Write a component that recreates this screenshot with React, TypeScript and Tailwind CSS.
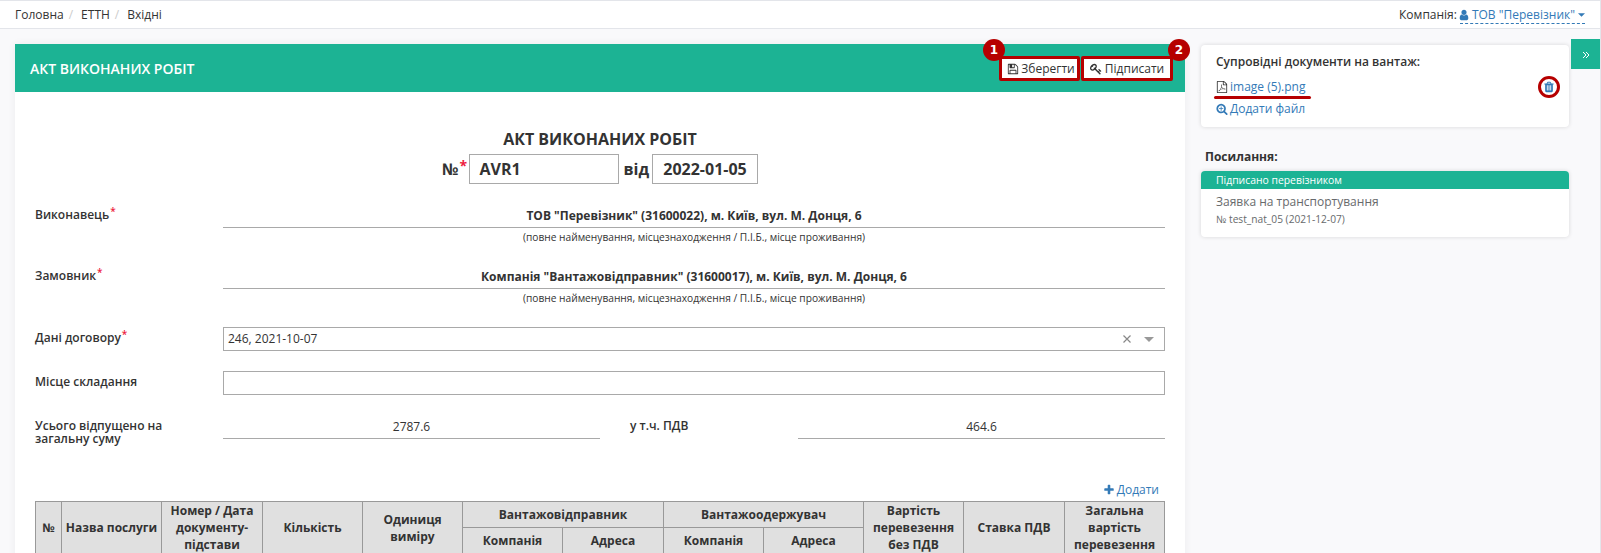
import type { ReactNode } from "react";

const ICONS = {
  save: "M512 1536h768v-384h-768v384zM1408 1536h128v-896q0-14-10-38.500t-20-34.500l-281-281q-10-10-34-20t-39-10v416q0 40-28 68t-68 28h-576q-40 0-68-28t-28-68v-416h-128v1280h128v-416q0-40 28-68t68-28h832q40 0 68 28t28 68v416zM1024 608v-320q0-13-9.500-22.500t-22.500-9.500h-192q-13 0-22.500 9.500t-9.500 22.500v320q0 13 9.500 22.500t22.500 9.500h192q13 0 22.500-9.500t9.500-22.500zM1664 640v928q0 40-28 68t-68 28h-1344q-40 0-68-28t-28-68v-1344q0-40 28-68t68-28h928q40 0 88 20t76 48l280 280q28 28 48 76t20 88z",
  key: "M832 512q0-80-56-136t-136-56-136 56-56 136q0 42 19 83-41-19-83-19-80 0-136 56t-56 136 56 136 136 56 136-56 56-136q0-42-19-83 41 19 83 19 80 0 136-56t56-136zm851 704q0 17-49 66t-66 49q-9 0-28.500-16t-36.500-33-38.500-40-24.500-26l-96 96 220 220q28 28 28 68 0 42-39 81t-81 39q-40 0-68-28l-671-671q-176 131-365 131-163 0-265.500-102.500t-102.500-265.500q0-160 95-313t248-248 313-95q163 0 265.500 102.500t102.500 265.500q0 189-131 365l355 355 96-96q-3-3-26-24.500t-40-38.500-33-36.500-16-28.500q0-17 49-66t66-49q13 0 23 10 6 6 46 44.500t82 79.500 86.500 86 73 78 28.500 41z",
  trash: "M704 1376v-704q0-14-9-23t-23-9h-64q-14 0-23 9t-9 23v704q0 14 9 23t23 9h64q14 0 23-9t9-23zm256 0v-704q0-14-9-23t-23-9h-64q-14 0-23 9t-9 23v704q0 14 9 23t23 9h64q14 0 23-9t9-23zm256 0v-704q0-14-9-23t-23-9h-64q-14 0-23 9t-9 23v704q0 14 9 23t23 9h64q14 0 23-9t9-23zm-544-992h448l-48-117q-7-9-17-11h-317q-10 2-17 11zm928 32v64q0 14-9 23t-23 9h-96v948q0 83-47 143.500t-113 60.500h-832q-66 0-113-58.500t-47-141.500v-952h-96q-14 0-23-9t-9-23v-64q0-14 9-23t23-9h309l70-167q15-37 54-63t79-26h320q40 0 79 26t54 63l70 167h309q14 0 23 9t9 23z",
  searchPlus: "M1088 800v64q0 13-9.500 22.500t-22.500 9.500h-224v224q0 13-9.500 22.500t-22.500 9.500h-64q-13 0-22.500-9.500t-9.500-22.500v-224h-224q-13 0-22.500-9.500t-9.500-22.500v-64q0-13 9.500-22.500t22.500-9.500h224v-224q0-13 9.500-22.500t22.500-9.500h64q13 0 22.500 9.500t9.500 22.500v224h224q13 0 22.500 9.500t9.500 22.500zm128 32q0-185-131.500-316.500t-316.500-131.500-316.500 131.500-131.500 316.500 131.500 316.500 316.500 131.500 316.500-131.500 131.500-316.500zm512 832q0 53-37.500 90.500t-90.500 37.500q-54 0-90-38l-343-342q-179 124-399 124-143 0-273.500-55.500t-225-150-150-225-55.500-273.500 55.500-273.500 150-225 225-150 273.500-55.500 273.500 55.500 225 150 150 225 55.500 273.500q0 220-124 399l343 343q37 37 37 90z",
  pdf: "M1596 380q28 28 48 76t20 88v1152q0 40-28 68t-68 28h-1344q-40 0-68-28t-28-68v-1600q0-40 28-68t68-28h896q40 0 88 20t76 48zm-444-244v376h376q-10-29-22-41l-313-313q-12-12-41-22zm384 1528v-1024h-416q-40 0-68-28t-28-68v-416h-768v1536h1280zm-514-593q33 26 84 56 59-7 117-7 147 0 177 49 16 22 2 52 0 1-1 2l-2 2v1q-6 38-71 38-48 0-115-20t-130-53q-221 24-392 83-153 262-242 262-15 0-28-7l-24-12q-1-1-6-5-10-10-6-36 9-40 56-91.500t132-96.500q14-9 23 6 2 2 2 4 52-85 107-197 68-136 104-262-24-82-30.500-159.500t6.500-127.500q11-40 42-40h22q23 0 35 15 18 21 9 68-2 6-4 8 1 3 1 8v30q-2 123-14 192 55 164 146 238zm-576 411q52-24 137-158-51 40-87.500 84t-49.500 74zm398-920q-15 42-2 132 1-7 7-44 0-3 7-43 1-4 4-8-1-1-1-2-1-2-1-3-1-22-13-36 0 1-1 2v2zm-124 661q135-54 284-81-2-1-13-9.500t-16-13.500q-76-67-127-176-27 86-83 197-30 56-45 83zm646-16q-24-24-140-24 76 28 124 28 14 0 18-1 0-1-2-3z",
  user: "M1536 1399q0 109-62.500 187t-150.500 78h-854q-88 0-150.500-78t-62.500-187q0-85 8.500-160.500t31.500-152 58.500-131 94-89 134.500-34.500q131 128 313 128t313-128q76 0 134.500 34.500t94 89 58.500 131 31.500 152 8.500 160.500zm-256-887q0 159-112.500 271.500t-271.500 112.500-271.500-112.500-112.500-271.500 112.500-271.500 271.500-112.500 271.500 112.500 112.500 271.500z",
  plus: "M1600 736v192q0 40-28 68t-68 28h-416v416q0 40-28 68t-68 28h-192q-40 0-68-28t-28-68v-416h-416q-40 0-68-28t-28-68v-192q0-40 28-68t68-28h416v-416q0-40 28-68t68-28h192q40 0 68 28t28 68v416h416q40 0 68 28t28 68z",
};

function Icon({ name, className = "" }: { name: keyof typeof ICONS; className?: string }) {
  return (
    <svg viewBox="0 0 1792 1792" fill="currentColor" className={`size-[12px] shrink-0 ${className}`}>
      <path d={ICONS[name]} />
    </svg>
  );
}

function Label({ children, required }: { children: ReactNode; required?: boolean }) {
  return (
    <div className="w-[188px] shrink-0 text-[12px] leading-[13px] font-semibold">
      {children}
      {required && <span className="relative -top-[4px] ml-px text-[10px] font-semibold text-[#ed1c40]">*</span>}
    </div>
  );
}

function Party({ label, value }: { label: string; value: string }) {
  return (
    <div className="flex h-[61px]">
      <Label required>{label}</Label>
      <div className="flex-1 text-center">
        <div className="h-[20px] border-b border-[#a9a9a9] text-[12px] leading-[16px] font-bold">{value}</div>
        <div className="text-[10.2px] leading-[19px]">(повне найменування, місцезнаходження / П.І.Б., місце проживання)</div>
      </div>
    </div>
  );
}

function Th({ children, rows = 1, cols = 1 }: { children: ReactNode; rows?: number; cols?: number }) {
  return (
    <th rowSpan={rows} colSpan={cols} className="border border-[#999] bg-[#e0e0e0] p-0 align-middle font-bold">
      {children}
    </th>
  );
}

function Badge({ children, className }: { children: ReactNode; className: string }) {
  return (
    <span className={`absolute flex size-[22px] items-center justify-center rounded-full bg-[#b60000] font-['DejaVu_Sans'] text-[12px] font-bold text-white ${className}`}>
      {children}
    </span>
  );
}

export default function App() {
  return (
    <div className="flex h-[553px] w-[1601px] flex-col overflow-hidden border-t border-r border-[#e3e5ea] bg-[#f9f9fb] font-['Open_Sans',sans-serif] text-[12px] text-[#333]">
      <header className="flex h-[28px] shrink-0 items-center border-b border-[#e3e5ea] bg-white pl-[15px] pr-[15px] text-[12px]">
        <span>Головна</span>
        <span className="mx-[5px] text-[#ccc]">/</span>
        <span className="ml-[3px]">ЕТТН</span>
        <span className="mx-[5px] text-[#ccc]">/</span>
        <span className="ml-[3px]">Вхідні</span>
        <span className="ml-auto">Компанія:</span>
        <a className="ml-[3px] flex h-[19px] items-center border-b border-dashed border-[#337ab7] pt-px text-[#337ab7]">
          <Icon name="user" className="mr-[2px] -ml-[2px]" />
          ТОВ "Перевізник"
          <svg viewBox="0 0 8 4" className="ml-[3px] h-[4px] w-[7px] fill-current">
            <path d="M0 0h8L4 4z" />
          </svg>
        </a>
      </header>

      <div className="flex min-h-0 flex-1 items-start">
        <main className="mt-[15px] ml-[15px] h-[600px] w-[1170px] shrink-0 bg-white shadow-[0_0_8px_rgba(0,0,0,0.06)]">
          <div className="relative flex h-[48px] items-center bg-[#1cb394] px-[15px] text-white">
            <h1 className="text-[14px] font-semibold">АКТ ВИКОНАНИХ РОБІТ</h1>
            <div className="mr-[-3px] ml-auto flex gap-px text-[#333]">
              <button className="flex h-[25px] w-[81px] items-center justify-center gap-[2px] rounded-[2px] border-[3px] border-[#b60000] bg-white pt-px pl-[3px] text-[12px]">
                <Icon name="save" />
                Зберегти
              </button>
              <button className="flex h-[25px] w-[92px] items-center justify-center gap-[3px] rounded-[2px] border-[3px] border-[#b60000] bg-white pt-px text-[12px]">
                <Icon name="key" />
                Підписати
              </button>
            </div>
            <Badge className="-top-[5px] left-[968px]">1</Badge>
            <Badge className="-top-[5px] left-[1153px]">2</Badge>
          </div>

          <div className="px-[20px] pt-[36px]">
            <h2 className="text-center text-[16px] leading-[22px] font-bold">АКТ ВИКОНАНИХ РОБІТ</h2>
            <div className="mt-[4px] flex items-center justify-center text-[16px] font-bold">
              №<span className="relative -top-[4px] ml-px w-[7px] text-[14px] font-bold text-[#ed1c40]">*</span>
              <div className="mr-[4px] ml-[3px] flex h-[30px] w-[150px] items-center border border-[#a9a9a9] pl-[9px]">AVR1</div>
              від
              <div className="ml-[3px] flex h-[30px] w-[106px] items-center justify-center border border-[#a9a9a9]">2022-01-05</div>
            </div>

            <div className="pt-[24px]">
              <Party label="Виконавець" value={'ТОВ "Перевізник" (31600022), м. Київ, вул. М. Донця, 6'} />
              <Party label="Замовник" value={'Компанія "Вантажовідправник" (31600017), м. Київ, вул. М. Донця, 6'} />
            </div>

            <div className="-mt-[3px] flex h-[44px] items-start">
              <div className="pt-[4px]"><Label required>Дані договору</Label></div>
              <div className="flex h-[24px] flex-1 items-center border border-[#a9a9a9] pl-[4px] pr-[10px] text-[12px]">
                246, 2021-10-07
                <svg viewBox="0 0 8 8" className="ml-auto size-[8px] stroke-[#888]"><path d="M.5 .5l7 7M7.500 .5l-7 7" strokeWidth="1.2" /></svg>
                <svg viewBox="0 0 10 5" className="ml-[13px] h-[5px] w-[10px] fill-[#999]"><path d="M0 0h10L5 5z" /></svg>
              </div>
            </div>
            <div className="flex h-[44px] items-start">
              <div className="pt-[4px]"><Label>Місце складання</Label></div>
              <div className="h-[24px] flex-1 border border-[#a9a9a9]" />
            </div>
            <div className="flex h-[65px] items-start">
              <div className="pt-[4px]"><Label>Усього відпущено на<br />загальну суму</Label></div>
              <div className="h-[24px] w-[377px] border-b border-[#a9a9a9] text-center text-[12px] leading-[24px]">2787.6</div>
              <div className="w-[198px] pt-[4px] pl-[30px] text-[12px] leading-[13px] font-semibold">у т.ч. ПДВ</div>
              <div className="h-[24px] flex-1 border-b border-[#a9a9a9] text-center text-[12px] leading-[24px]">464.6</div>
            </div>

            <div className="mb-px flex h-[20px] items-center justify-end gap-[2px] pr-[6px] pb-px text-[12px] text-[#337ab7]">
              <Icon name="plus" />
              Додати
            </div>
            <table className="w-[1130px] table-fixed border-collapse text-[12px] leading-[17px]">
              <colgroup>
                <col className="w-[26px]" />
                <col className="w-[100px]" />
                <col className="w-[101px]" />
                <col className="w-[100px]" />
                <col className="w-[100px]" />
                <col className="w-[100px]" />
                <col className="w-[101px]" />
                <col className="w-[100px]" />
                <col className="w-[100px]" />
                <col className="w-[100px]" />
                <col className="w-[101px]" />
                <col className="w-[100px]" />
              </colgroup>
              <thead>
                <tr className="h-[26px]">
                  <Th rows={2}>№</Th>
                  <Th rows={2}>Назва послуги</Th>
                  <Th rows={2}>Номер / Дата<br />документу-<br />підстави</Th>
                  <Th rows={2}>Кількість</Th>
                  <Th rows={2}>Одиниця<br />виміру</Th>
                  <Th cols={2}>Вантажовідправник</Th>
                  <Th cols={2}>Вантажоодержувач</Th>
                  <Th rows={2}>Вартість<br />перевезення<br />без ПДВ</Th>
                  <Th rows={2}>Ставка ПДВ</Th>
                  <Th rows={2}>Загальна<br />вартість<br />перевезення</Th>
                </tr>
                <tr className="h-[26px]">
                  <Th>Компанія</Th>
                  <Th>Адреса</Th>
                  <Th>Компанія</Th>
                  <Th>Адреса</Th>
                </tr>
              </thead>
            </table>
          </div>
        </main>

        <aside className="mt-[16px] ml-[16px] w-[368px] shrink-0">
          <section className="h-[82px] rounded-[4px] bg-white px-[15px] pt-[8px] shadow-[0_0_4px_rgba(0,0,0,0.14)]">
            <h3 className="text-[12px] leading-[18px] font-semibold">Супровідні документи на вантаж:</h3>
            <div className="relative mt-[5px] flex h-[22px] items-center text-[12px]">
              <Icon name="pdf" className="text-[#333]" />
              <a className="ml-[2px] text-[#337ab7]">image (5).png</a>
              <span className="absolute top-[20px] -left-[2px] h-[3px] w-[97px] rounded-full bg-[#b60000]" />
              <span className="absolute top-0 right-[-6px] flex size-[22px] items-center justify-center rounded-full border-[3px] border-[#b60000] text-[#337ab7]">
                <Icon name="trash" />
              </span>
            </div>
            <a className="flex h-[22px] items-center gap-[2px] text-[12px] text-[#337ab7]">
              <Icon name="searchPlus" />
              Додати файл
            </a>
          </section>
          <h3 className="mt-[21px] mb-[5px] ml-[4px] text-[12px] leading-[18px] font-bold">Посилання:</h3>
          <section className="h-[66px] overflow-hidden rounded-[4px] bg-white shadow-[0_0_4px_rgba(0,0,0,0.14)]">
            <div className="h-[18px] bg-[#1cb394] px-[15px] text-[10.4px] leading-[18px] text-white">Підписано перевізником</div>
            <div className="px-[15px] pt-[4px] text-[#676a6c]">
              <div className="text-[12px] leading-[18px]">Заявка на транспортування</div>
              <div className="text-[10.2px] leading-[16px]">№ test_nat_05 (2021-12-07)</div>
            </div>
          </section>
        </aside>
        <button className="mt-[10px] ml-[2px] flex h-[30px] w-[29px] shrink-0 items-center justify-center bg-[#1cb394] text-white">
          <svg viewBox="0 0 8 8" className="mt-[2px] size-[8px] fill-none stroke-current">
            <path d="M1 1l3 3-3 3M4 1l3 3-3 3" strokeWidth="1" />
          </svg>
        </button>
      </div>
    </div>
  );
}
